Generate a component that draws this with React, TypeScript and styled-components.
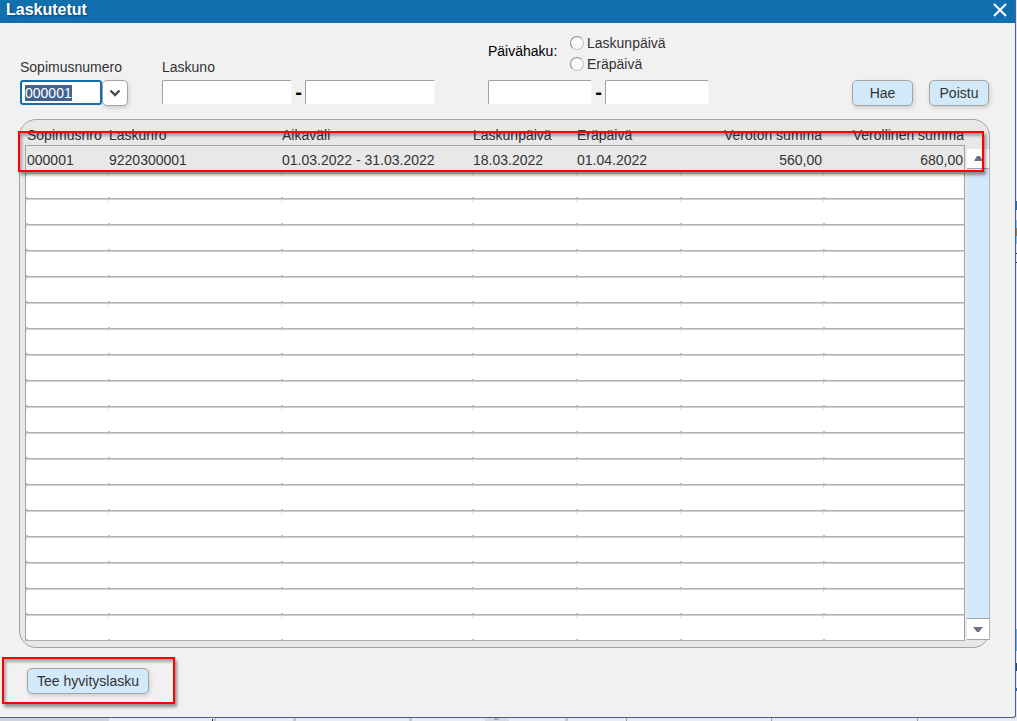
import React, { useEffect, useRef } from "react";
import styled, { createGlobalStyle, css } from "styled-components";

const Global = createGlobalStyle`
  * { box-sizing: border-box; }
  body {
    margin: 0;
    background: #e4e8f0;
    font-family: "Liberation Sans", Arial, sans-serif;
    font-size: 14px;
    line-height: 20px;
    color: #333;
  }
  button, input { font: inherit; color: inherit; }
`;

const Desktop = styled.div`
  display: grid;
  grid-template-columns: minmax(0, 1fr) 1px;
  grid-template-rows: auto 3px;
`;

const BehindRight = styled.div`
  background:
    linear-gradient(#1c6fb8, #1c6fb8) 0 201px / 1px 9px no-repeat,
    linear-gradient(#7ec0ee, #7ec0ee) 0 220px / 1px 8px no-repeat,
    linear-gradient(#8a8050, #8a8050) 0 228px / 1px 8px no-repeat,
    linear-gradient(#7ec0ee, #7ec0ee) 0 236px / 1px 8px no-repeat,
    linear-gradient(#333, #333) 0 253px / 1px 1px no-repeat,
    linear-gradient(#333, #333) 0 262px / 1px 1px no-repeat,
    linear-gradient(#6cb6ea, #6cb6ea) 0 629px / 1px 22px no-repeat,
    linear-gradient(#1d4a78, #1d4a78) 0 663px / 1px 8px no-repeat,
    linear-gradient(#1c6fb8, #1c6fb8) 0 688px / 1px 3px no-repeat,
    #dfe4ee;
`;

const BehindBottom = styled.div`
  grid-column: 1 / -1;
  background:
    linear-gradient(#cfd4da, #cfd4da) 0 0 / 109px 3px no-repeat,
    linear-gradient(#222, #222) 212px 1px / 1px 2px no-repeat,
    linear-gradient(#c4c9d2, #c4c9d2) 214px 0 / 2px 3px no-repeat,
    linear-gradient(#c4c9d2, #c4c9d2) 293px 0 / 3px 3px no-repeat,
    linear-gradient(#c4c9d2, #c4c9d2) 409px 0 / 3px 3px no-repeat,
    linear-gradient(#a9aeb0, #a9aeb0) 494px 0 / 5px 2px no-repeat,
    linear-gradient(#d6dae2, #d6dae2) 485px 0 / 24px 3px no-repeat,
    linear-gradient(#c4c9d2, #c4c9d2) 565px 0 / 3px 3px no-repeat,
    linear-gradient(#999ea8, #999ea8) 626px 0 / 1px 3px no-repeat,
    linear-gradient(#999ea8, #999ea8) 771px 0 / 1px 3px no-repeat,
    linear-gradient(#999ea8, #999ea8) 917px 0 / 1px 3px no-repeat,
    #e8ecf3;
`;

const Dialog = styled.main`
  background: #f1f1f1;
  border: solid #46628f;
  border-width: 0 1px 1px 0;
  border-bottom-right-radius: 3px;
`;

const TitleBar = styled.header`
  display: flex;
  justify-content: space-between;
  align-items: center;
  height: 23px;
  padding: 0 8px 3px 6px;
  background: #116fae;
  color: #fff;
`;

const Title = styled.h1`
  margin: 0;
  font-size: 16px;
  line-height: 20px;
  text-shadow: 1px 1px 2px rgba(0, 0, 0, 0.4);
`;

const CloseButton = styled.button`
  display: flex;
  padding: 0;
  border: 0;
  background: none;
`;

const Filters = styled.form`
  display: flex;
  align-items: flex-end;
  padding: 9px 26px 13px 20px;
`;

const Field = styled.div<{ $after: number }>`
  display: grid;
  gap: 3px;
  margin-right: ${(p) => p.$after}px;
`;

const Controls = styled.div`
  display: flex;
  align-items: flex-start;
  height: 26px;
`;

const TextBox = styled.input<{ $width: number }>`
  width: ${(p) => p.$width}px;
  height: 25px;
  padding: 0 3px;
  border: 1px solid;
  border-color: #a0a0a0 #f6f6f6 #f6f6f6 #a0a0a0;
  border-radius: 2px;
  background: #fff;
  outline: none;
`;

const ComboBox = styled(TextBox)`
  border: 2px solid #116fae;
  border-radius: 3px;
  &::selection {
    background: #43638f;
    color: #fff;
  }
`;

const raised = css`
  border: 1px solid #a3a3a3;
  border-radius: 5px;
  box-shadow: 1px 2px 4px rgba(0, 0, 0, 0.15);
`;

const DropButton = styled.button`
  ${raised}
  display: flex;
  align-items: center;
  justify-content: center;
  width: 26px;
  height: 26px;
  padding: 0;
  background: #fff;
`;

const Button = styled.button<{ $width: number }>`
  ${raised}
  width: ${(p) => p.$width}px;
  height: 26px;
  padding: 0;
  background: #d2e9f9;
`;

const Dash = styled.span`
  flex: 0 0 13px;
  text-align: center;
  font-size: 20px;
  font-weight: bold;
  line-height: 24px;
  color: #000;
`;

const DateKind = styled.div`
  display: flex;
  padding-bottom: 3px;
`;

const DateKindTitle = styled.span`
  width: 82px;
  padding-top: 9px;
  color: #000;
`;

const Radio = styled.label`
  display: flex;
  align-items: center;
  gap: 3px;
  height: 21px;
  input {
    appearance: none;
    width: 14px;
    height: 14px;
    margin: 0;
    border: 1px solid;
    border-color: #8c8c8c #c4c4c4 #c4c4c4 #8c8c8c;
    border-radius: 50%;
    background: #f8fcf8;
  }
`;

const Actions = styled.div`
  display: flex;
  gap: 16px;
  margin-left: auto;
`;

const Panel = styled.section`
  position: relative;
  display: flex;
  margin: 0 25px 0 19px;
  padding: 0 0 6px 5px;
  border: 1px solid #a3a3a3;
  border-radius: 17px;
  background: #e8e8e8;
`;

const Table = styled.table`
  flex: 1;
  width: 0;
  table-layout: fixed;
  border-collapse: separate;
  border-spacing: 0;
`;

const HeadCell = styled.th<{ $right?: boolean }>`
  height: 26px;
  padding: 4px 1px 0 1px;
  border-bottom: 1px solid #a3a3a3;
  font-weight: normal;
  line-height: 20px;
  white-space: nowrap;
  text-align: ${(p) => (p.$right ? "right" : "left")};
  &:first-child { padding-left: 2px; }
`;

const selectedCell = css`
  height: 27px;
  border-bottom: 1px solid #e8e8e8;
  background: #e8e8e8;
`;

const emptyCell = css`
  height: 26px;
  border-bottom: 1px solid #b0b0b0;
  background:
    linear-gradient(#c0c0c0, #c0c0c0) left bottom / 2px 1px no-repeat,
    linear-gradient(#d0d0d0, #d0d0d0) left top / 100% 1px no-repeat,
    linear-gradient(#e4e4e4, #e4e4e4) left top / 1px 3px no-repeat,
    #fff;
`;

const Cell = styled.td<{ $right?: boolean; $selected?: boolean }>`
  ${(p) => (p.$selected ? selectedCell : emptyCell)}
  padding: 2px 1px 0 1px;
  line-height: 20px;
  white-space: nowrap;
  text-align: ${(p) => (p.$right ? "right" : "left")};
  &:first-child { border-left: 1px solid #a3a3a3; }
  &:last-child { border-right: 1px solid #a3a3a3; }
`;

const ScrollBar = styled.div`
  display: flex;
  flex-direction: column;
  width: 23px;
  margin: 29px -1px 1px 2px;
  border-right: 1px solid #b4b4b4;
  background: #d2e9f9;
`;

const ScrollButton = styled.button<{ $down?: boolean }>`
  display: flex;
  align-items: center;
  justify-content: center;
  height: ${(p) => (p.$down ? 22 : 20)}px;
  padding: 0;
  border: 0 solid #a3a3a3;
  border-width: ${(p) => (p.$down ? "1px 0" : "0 0 1px")};
  margin-top: ${(p) => (p.$down ? "auto" : 0)};
  background: #fff;
  svg { flex: none; }
`;

const redFrame = css`
  border: 2px solid #f00;
  box-shadow: 2px 3px 3px rgba(0, 0, 0, 0.4), inset 2px 3px 3px rgba(0, 0, 0, 0.3);
`;

const RowHighlight = styled.div`
  ${redFrame}
  position: absolute;
  top: 11px;
  left: -2px;
  right: 5px;
  height: 41px;
  pointer-events: none;
`;

const Footer = styled.footer`
  display: flex;
  padding: 9px 2px 13px;
`;

const ActionHighlight = styled.div`
  ${redFrame}
  padding: 9px 24px 8px 23px;
`;

const columns = [
  { title: "Sopimusnro", width: 83 },
  { title: "Laskunro", width: 173 },
  { title: "Aikaväli", width: 191 },
  { title: "Laskunpäivä", width: 104 },
  { title: "Eräpäivä", width: 104 },
  { title: "Veroton summa", width: 143, right: true },
  { title: "Verollinen summa", right: true },
];

const invoice = ["000001", "9220300001", "01.03.2022 - 31.03.2022", "18.03.2022", "01.04.2022", "560,00", "680,00"];
const rows: string[][] = [invoice, ...Array.from({ length: 18 }, () => columns.map(() => ""))];

export default function App() {
  const contract = useRef<HTMLInputElement>(null);

  useEffect(() => {
    contract.current?.focus();
    contract.current?.select();
  }, []);

  return (
    <>
      <Global />
      <Desktop>
        <Dialog>
          <TitleBar>
            <Title>Laskutetut</Title>
            <CloseButton aria-label="Sulje">
              <svg width="14" height="14" viewBox="0 0 14 14" stroke="#fff" strokeWidth="2">
                <path d="M1 1L13 13M13 1L1 13" />
              </svg>
            </CloseButton>
          </TitleBar>

          <Filters onSubmit={(e) => e.preventDefault()}>
            <Field $after={34}>
              <label htmlFor="contract">Sopimusnumero</label>
              <Controls>
                <ComboBox id="contract" ref={contract} $width={82} defaultValue="000001" />
                <DropButton type="button" aria-label="Valitse sopimusnumero">
                  <svg width="12" height="8" viewBox="0 0 12 8" fill="none" stroke="#4a4a4a" strokeWidth="2.400">
                    <path d="M1.500 1.500L6 6L10.500 1.500" />
                  </svg>
                </DropButton>
              </Controls>
            </Field>
            <Field $after={53}>
              <label htmlFor="invoice-from">Laskuno</label>
              <Controls>
                <TextBox id="invoice-from" $width={130} />
                <Dash>-</Dash>
                <TextBox aria-label="Laskuno, loppu" $width={130} />
              </Controls>
            </Field>
            <Field $after={0}>
              <DateKind role="radiogroup" aria-labelledby="date-kind">
                <DateKindTitle id="date-kind">Päivähaku:</DateKindTitle>
                <div>
                  <Radio>
                    <input type="radio" name="kind" />
                    Laskunpäivä
                  </Radio>
                  <Radio>
                    <input type="radio" name="kind" />
                    Eräpäivä
                  </Radio>
                </div>
              </DateKind>
              <Controls>
                <TextBox aria-label="Päivä, alku" $width={104} />
                <Dash>-</Dash>
                <TextBox aria-label="Päivä, loppu" $width={104} />
              </Controls>
            </Field>
            <Actions>
              <Button $width={61}>Hae</Button>
              <Button type="button" $width={60}>Poistu</Button>
            </Actions>
          </Filters>

          <Panel>
            <Table>
              <colgroup>
                {columns.map((c) => (
                  <col key={c.title} style={{ width: c.width }} />
                ))}
              </colgroup>
              <thead>
                <tr>
                  {columns.map((c) => (
                    <HeadCell key={c.title} $right={c.right}>{c.title}</HeadCell>
                  ))}
                </tr>
              </thead>
              <tbody>
                {rows.map((row, r) => (
                  <tr key={r}>
                    {row.map((text, i) => (
                      <Cell key={i} $right={columns[i].right} $selected={r === 0}>{text}</Cell>
                    ))}
                  </tr>
                ))}
              </tbody>
            </Table>
            <ScrollBar>
              <ScrollButton aria-label="Ylös">
                <svg width="9" height="5" viewBox="0 0 9 5" fill="#6e6e86"><path d="M3 0H6L9 5H0Z" /></svg>
              </ScrollButton>
              <ScrollButton $down aria-label="Alas">
                <svg width="10" height="5" viewBox="0 0 10 5" fill="#6e6e86"><path d="M0 0H10L6 5H4Z" /></svg>
              </ScrollButton>
            </ScrollBar>
            <RowHighlight />
          </Panel>

          <Footer>
            <ActionHighlight>
              <Button $width={122}>Tee hyvityslasku</Button>
            </ActionHighlight>
          </Footer>
        </Dialog>
        <BehindRight />
        <BehindBottom />
      </Desktop>
    </>
  );
}
